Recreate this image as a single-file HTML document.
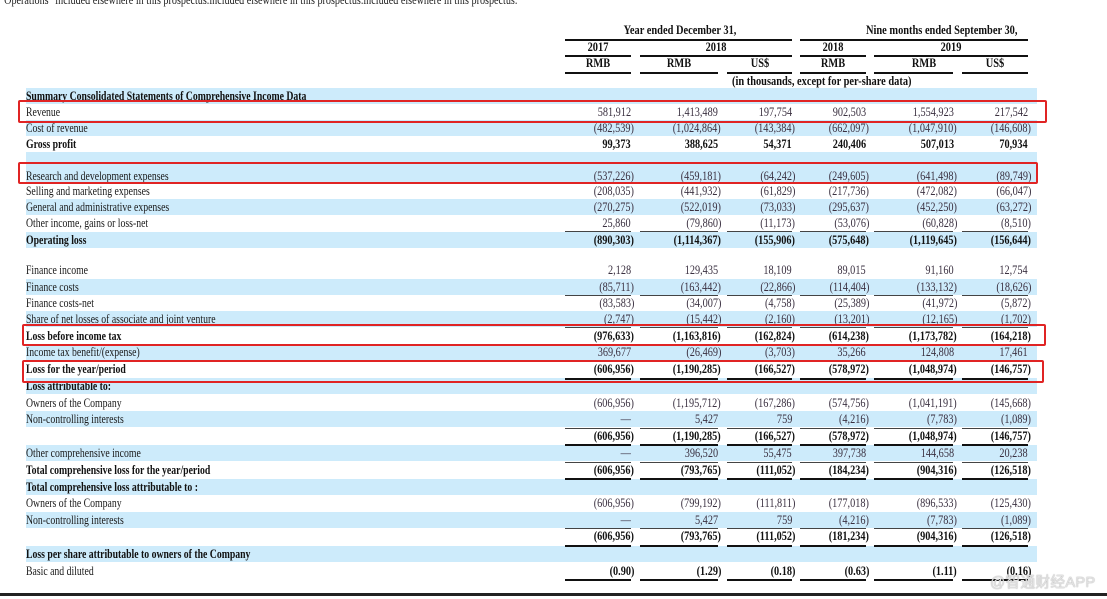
<!DOCTYPE html>
<html><head><meta charset="utf-8"><style>
html,body{margin:0;padding:0;background:#fff;}
body{width:1107px;height:599px;position:relative;overflow:hidden;font-family:"Liberation Serif",serif;font-size:13px;color:#222;}
.r{position:absolute;left:26px;width:1011px;height:16px;}
.b{background:#cdebfb;}
.l{position:absolute;left:0;top:0;line-height:16px;transform:scaleX(.75);transform-origin:left;white-space:nowrap;color:#1a1a1a;}
.n{position:absolute;top:0;line-height:16px;transform:scaleX(.79);transform-origin:right;white-space:nowrap;color:#3a3040;}
.bd .l,.bd .n{font-weight:bold;color:#111;}
.c1{right:403px}.c2{right:316px}.c3{right:242px}.c4{right:168px}.c5{right:80px}.c6{right:6px}
.p{padding-right:4px}
.ln{position:absolute;height:1px;background:#444;}
.tk{position:absolute;height:2px;background:#111;}
.h{position:absolute;font-weight:bold;transform:scaleX(.8);white-space:nowrap;line-height:14px;color:#111;}
.box{position:absolute;border:2.5px solid #e02424;border-radius:2px;}
</style></head><body>
<div style="position:absolute;left:0;top:-8px;transform:scaleX(.78);transform-origin:left;white-space:nowrap;">"Operations" included elsewhere in this prospectus.included elsewhere in this prospectus.included elsewhere in this prospectus.</div>

<div class="h" style="left:600px;width:160px;text-align:center;top:23px">Year ended December 31,</div>
<div class="h" style="left:848px;width:180px;text-align:center;top:23px">Nine months ended September 30,</div>
<div class="tk" style="left:565px;width:227px;top:39px;height:1.5px"></div>
<div class="tk" style="left:800px;width:228px;top:39px;height:1.5px"></div>
<div class="h" style="left:578px;width:40px;text-align:center;top:40px">2017</div>
<div class="h" style="left:696px;width:40px;text-align:center;top:40px">2018</div>
<div class="h" style="left:813px;width:40px;text-align:center;top:40px">2018</div>
<div class="h" style="left:931px;width:40px;text-align:center;top:40px">2019</div>
<div class="tk" style="left:565px;width:66px;top:55px;height:1.5px"></div>
<div class="tk" style="left:640px;width:152px;top:55px;height:1.5px"></div>
<div class="tk" style="left:800px;width:66px;top:55px;height:1.5px"></div>
<div class="tk" style="left:874px;width:154px;top:55px;height:1.5px"></div>
<div class="h" style="left:578px;width:40px;text-align:center;top:56px">RMB</div>
<div class="h" style="left:659px;width:40px;text-align:center;top:56px">RMB</div>
<div class="h" style="left:740px;width:40px;text-align:center;top:56px">US$</div>
<div class="h" style="left:813px;width:40px;text-align:center;top:56px">RMB</div>
<div class="h" style="left:904px;width:40px;text-align:center;top:56px">RMB</div>
<div class="h" style="left:975px;width:40px;text-align:center;top:56px">US$</div>
<div class="tk" style="left:565px;width:66px;top:72px;height:1.5px"></div>
<div class="tk" style="left:640px;width:78px;top:72px;height:1.5px"></div>
<div class="tk" style="left:727px;width:65px;top:72px;height:1.5px"></div>
<div class="tk" style="left:800px;width:66px;top:72px;height:1.5px"></div>
<div class="tk" style="left:874px;width:79px;top:72px;height:1.5px"></div>
<div class="tk" style="left:962px;width:66px;top:72px;height:1.5px"></div>
<div class="h" style="left:712px;width:200px;text-align:center;top:74px">(in thousands, except for per-share data)</div>

<div class="r b bd" style="top:88px"><span class="l">Summary Consolidated Statements of Comprehensive Income Data</span></div>
<div class="r" style="top:104px"><span class="l">Revenue</span><span class="n c1 p">581,912</span><span class="n c2 p">1,413,489</span><span class="n c3 p">197,754</span><span class="n c4 p">902,503</span><span class="n c5 p">1,554,923</span><span class="n c6 p">217,542</span></div>
<div class="r b" style="top:120px"><span class="l">Cost of revenue</span><span class="n c1">(482,539)</span><span class="n c2">(1,024,864)</span><span class="n c3">(143,384)</span><span class="n c4">(662,097)</span><span class="n c5">(1,047,910)</span><span class="n c6">(146,608)</span></div>
<div class="r bd" style="top:136px"><span class="l">Gross profit</span><span class="n c1 p">99,373</span><span class="n c2 p">388,625</span><span class="n c3 p">54,371</span><span class="n c4 p">240,406</span><span class="n c5 p">507,013</span><span class="n c6 p">70,934</span></div>
<div class="r b" style="top:152px;height:32px"></div>
<div class="r b" style="top:168px"><span class="l">Research and development expenses</span><span class="n c1">(537,226)</span><span class="n c2">(459,181)</span><span class="n c3">(64,242)</span><span class="n c4">(249,605)</span><span class="n c5">(641,498)</span><span class="n c6">(89,749)</span></div>
<div class="r" style="top:183px"><span class="l">Selling and marketing expenses</span><span class="n c1">(208,035)</span><span class="n c2">(441,932)</span><span class="n c3">(61,829)</span><span class="n c4">(217,736)</span><span class="n c5">(472,082)</span><span class="n c6">(66,047)</span></div>
<div class="r b" style="top:199px"><span class="l">General and administrative expenses</span><span class="n c1">(270,275)</span><span class="n c2">(522,019)</span><span class="n c3">(73,033)</span><span class="n c4">(295,637)</span><span class="n c5">(452,250)</span><span class="n c6">(63,272)</span></div>
<div class="r" style="top:215px"><span class="l">Other income, gains or loss-net</span><span class="n c1 p">25,860</span><span class="n c2">(79,860)</span><span class="n c3">(11,173)</span><span class="n c4">(53,076)</span><span class="n c5">(60,828)</span><span class="n c6">(8,510)</span></div>
<div class="r b bd" style="top:232px"><span class="l">Operating loss</span><span class="n c1">(890,303)</span><span class="n c2">(1,114,367)</span><span class="n c3">(155,906)</span><span class="n c4">(575,648)</span><span class="n c5">(1,119,645)</span><span class="n c6">(156,644)</span></div>
<div class="r" style="top:262px"><span class="l">Finance income</span><span class="n c1 p">2,128</span><span class="n c2 p">129,435</span><span class="n c3 p">18,109</span><span class="n c4 p">89,015</span><span class="n c5 p">91,160</span><span class="n c6 p">12,754</span></div>
<div class="r b" style="top:279px"><span class="l">Finance costs</span><span class="n c1">(85,711)</span><span class="n c2">(163,442)</span><span class="n c3">(22,866)</span><span class="n c4">(114,404)</span><span class="n c5">(133,132)</span><span class="n c6">(18,626)</span></div>
<div class="r" style="top:295px"><span class="l">Finance costs-net</span><span class="n c1">(83,583)</span><span class="n c2">(34,007)</span><span class="n c3">(4,758)</span><span class="n c4">(25,389)</span><span class="n c5">(41,972)</span><span class="n c6">(5,872)</span></div>
<div class="r b" style="top:311px"><span class="l">Share of net losses of associate and joint venture</span><span class="n c1">(2,747)</span><span class="n c2">(15,442)</span><span class="n c3">(2,160)</span><span class="n c4">(13,201)</span><span class="n c5">(12,165)</span><span class="n c6">(1,702)</span></div>
<div class="r bd" style="top:328px"><span class="l">Loss before income tax</span><span class="n c1">(976,633)</span><span class="n c2">(1,163,816)</span><span class="n c3">(162,824)</span><span class="n c4">(614,238)</span><span class="n c5">(1,173,782)</span><span class="n c6">(164,218)</span></div>
<div class="r b" style="top:344px"><span class="l">Income tax benefit/(expense)</span><span class="n c1 p">369,677</span><span class="n c2">(26,469)</span><span class="n c3">(3,703)</span><span class="n c4 p">35,266</span><span class="n c5 p">124,808</span><span class="n c6 p">17,461</span></div>
<div class="r bd" style="top:361px"><span class="l">Loss for the year/period</span><span class="n c1">(606,956)</span><span class="n c2">(1,190,285)</span><span class="n c3">(166,527)</span><span class="n c4">(578,972)</span><span class="n c5">(1,048,974)</span><span class="n c6">(146,757)</span></div>
<div class="r b bd" style="top:378px"><span class="l">Loss attributable to:</span></div>
<div class="r" style="top:395px"><span class="l">Owners of the Company</span><span class="n c1">(606,956)</span><span class="n c2">(1,195,712)</span><span class="n c3">(167,286)</span><span class="n c4">(574,756)</span><span class="n c5">(1,041,191)</span><span class="n c6">(145,668)</span></div>
<div class="r b" style="top:411px"><span class="l">Non-controlling interests</span><span class="n c1 p">—</span><span class="n c2 p">5,427</span><span class="n c3 p">759</span><span class="n c4">(4,216)</span><span class="n c5">(7,783)</span><span class="n c6">(1,089)</span></div>
<div class="r bd" style="top:428px"><span class="n c1">(606,956)</span><span class="n c2">(1,190,285)</span><span class="n c3">(166,527)</span><span class="n c4">(578,972)</span><span class="n c5">(1,048,974)</span><span class="n c6">(146,757)</span></div>
<div class="r b" style="top:445px"><span class="l">Other comprehensive income</span><span class="n c1 p">—</span><span class="n c2 p">396,520</span><span class="n c3 p">55,475</span><span class="n c4 p">397,738</span><span class="n c5 p">144,658</span><span class="n c6 p">20,238</span></div>
<div class="r bd" style="top:462px"><span class="l">Total comprehensive loss for the year/period</span><span class="n c1">(606,956)</span><span class="n c2">(793,765)</span><span class="n c3">(111,052)</span><span class="n c4">(184,234)</span><span class="n c5">(904,316)</span><span class="n c6">(126,518)</span></div>
<div class="r b bd" style="top:479px"><span class="l">Total comprehensive loss attributable to :</span></div>
<div class="r" style="top:495px"><span class="l">Owners of the Company</span><span class="n c1">(606,956)</span><span class="n c2">(799,192)</span><span class="n c3">(111,811)</span><span class="n c4">(177,018)</span><span class="n c5">(896,533)</span><span class="n c6">(125,430)</span></div>
<div class="r b" style="top:512px"><span class="l">Non-controlling interests</span><span class="n c1 p">—</span><span class="n c2 p">5,427</span><span class="n c3 p">759</span><span class="n c4">(4,216)</span><span class="n c5">(7,783)</span><span class="n c6">(1,089)</span></div>
<div class="r bd" style="top:528px"><span class="n c1">(606,956)</span><span class="n c2">(793,765)</span><span class="n c3">(111,052)</span><span class="n c4">(181,234)</span><span class="n c5">(904,316)</span><span class="n c6">(126,518)</span></div>
<div class="r b bd" style="top:546px"><span class="l">Loss per share attributable to owners of the Company</span></div>
<div class="r" style="top:563px"><span class="l">Basic and diluted</span><span class="n c1" style="font-weight:bold;color:#111">(0.90)</span><span class="n c2" style="font-weight:bold;color:#111">(1.29)</span><span class="n c3" style="font-weight:bold;color:#111">(0.18)</span><span class="n c4" style="font-weight:bold;color:#111">(0.63)</span><span class="n c5" style="font-weight:bold;color:#111">(1.11)</span><span class="n c6" style="font-weight:bold;color:#111">(0.16)</span></div>

<div class="ln" style="left:565px;width:66px;top:231px"></div><div class="ln" style="left:640px;width:78px;top:231px"></div><div class="ln" style="left:727px;width:65px;top:231px"></div><div class="ln" style="left:800px;width:66px;top:231px"></div><div class="ln" style="left:874px;width:79px;top:231px"></div><div class="ln" style="left:962px;width:66px;top:231px"></div>
<div class="ln" style="left:565px;width:66px;top:295px"></div><div class="ln" style="left:640px;width:78px;top:295px"></div><div class="ln" style="left:727px;width:65px;top:295px"></div><div class="ln" style="left:800px;width:66px;top:295px"></div><div class="ln" style="left:874px;width:79px;top:295px"></div><div class="ln" style="left:962px;width:66px;top:295px"></div>
<div class="ln" style="left:565px;width:66px;top:327px"></div><div class="ln" style="left:640px;width:78px;top:327px"></div><div class="ln" style="left:727px;width:65px;top:327px"></div><div class="ln" style="left:800px;width:66px;top:327px"></div><div class="ln" style="left:874px;width:79px;top:327px"></div><div class="ln" style="left:962px;width:66px;top:327px"></div>
<div class="tk" style="left:565px;width:66px;top:378px"></div><div class="tk" style="left:640px;width:78px;top:378px"></div><div class="tk" style="left:727px;width:65px;top:378px"></div><div class="tk" style="left:800px;width:66px;top:378px"></div><div class="tk" style="left:874px;width:79px;top:378px"></div><div class="tk" style="left:962px;width:66px;top:378px"></div>
<div class="ln" style="left:565px;width:66px;top:428px"></div><div class="ln" style="left:640px;width:78px;top:428px"></div><div class="ln" style="left:727px;width:65px;top:428px"></div><div class="ln" style="left:800px;width:66px;top:428px"></div><div class="ln" style="left:874px;width:79px;top:428px"></div><div class="ln" style="left:962px;width:66px;top:428px"></div>
<div class="tk" style="left:565px;width:66px;top:444px"></div><div class="tk" style="left:640px;width:78px;top:444px"></div><div class="tk" style="left:727px;width:65px;top:444px"></div><div class="tk" style="left:800px;width:66px;top:444px"></div><div class="tk" style="left:874px;width:79px;top:444px"></div><div class="tk" style="left:962px;width:66px;top:444px"></div>
<div class="ln" style="left:565px;width:66px;top:462px"></div><div class="ln" style="left:640px;width:78px;top:462px"></div><div class="ln" style="left:727px;width:65px;top:462px"></div><div class="ln" style="left:800px;width:66px;top:462px"></div><div class="ln" style="left:874px;width:79px;top:462px"></div><div class="ln" style="left:962px;width:66px;top:462px"></div>
<div class="tk" style="left:565px;width:66px;top:478px"></div><div class="tk" style="left:640px;width:78px;top:478px"></div><div class="tk" style="left:727px;width:65px;top:478px"></div><div class="tk" style="left:800px;width:66px;top:478px"></div><div class="tk" style="left:874px;width:79px;top:478px"></div><div class="tk" style="left:962px;width:66px;top:478px"></div>
<div class="ln" style="left:565px;width:66px;top:528px"></div><div class="ln" style="left:640px;width:78px;top:528px"></div><div class="ln" style="left:727px;width:65px;top:528px"></div><div class="ln" style="left:800px;width:66px;top:528px"></div><div class="ln" style="left:874px;width:79px;top:528px"></div><div class="ln" style="left:962px;width:66px;top:528px"></div>
<div class="tk" style="left:565px;width:66px;top:545px"></div><div class="tk" style="left:640px;width:78px;top:545px"></div><div class="tk" style="left:727px;width:65px;top:545px"></div><div class="tk" style="left:800px;width:66px;top:545px"></div><div class="tk" style="left:874px;width:79px;top:545px"></div><div class="tk" style="left:962px;width:66px;top:545px"></div>
<div class="tk" style="left:565px;width:66px;top:579px"></div><div class="tk" style="left:640px;width:78px;top:579px"></div><div class="tk" style="left:727px;width:65px;top:579px"></div><div class="tk" style="left:800px;width:66px;top:579px"></div><div class="tk" style="left:874px;width:79px;top:579px"></div><div class="tk" style="left:962px;width:66px;top:579px"></div>

<div class="box" style="left:18px;top:100px;width:1025px;height:19px"></div>
<div class="box" style="left:18px;top:162px;width:1016px;height:18px"></div>
<div class="box" style="left:22px;top:324px;width:1020px;height:18px"></div>
<div class="box" style="left:22px;top:360px;width:1018px;height:19px"></div>

<div style="position:absolute;left:990px;top:571px;font-family:'Liberation Sans','Noto Sans CJK SC',sans-serif;font-size:15px;color:#e2e2e2;text-shadow:0 0 1px #888;white-space:nowrap;">@智通财经APP</div>
<div style="position:absolute;left:0;top:593px;width:1107px;height:3px;background:#222;"></div>
</body></html>
